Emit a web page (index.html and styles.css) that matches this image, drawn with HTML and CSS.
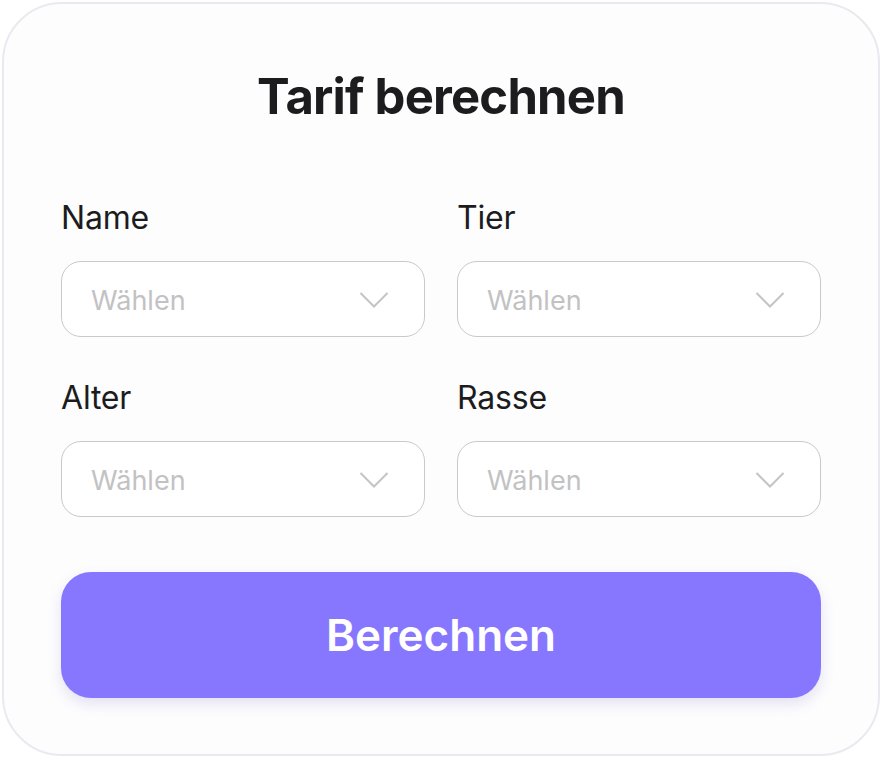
FILE: index.html
```html
<!DOCTYPE html>
<html lang="de">
<head>
<meta charset="utf-8">
<title>Tarif berechnen</title>
<link rel="stylesheet" href="styles.css">
</head>
<body>
<div class="page">
  <form class="card">
    <h1 class="title">Tarif berechnen</h1>
    <div class="grid">
      <div class="field">
        <label class="label">Name</label>
        <div class="select"><span class="placeholder">Wählen</span><svg class="chev" width="30" height="16" viewBox="0 0 30 16"><path d="M1.5 1 L15 14.5 L28.5 1" fill="none" stroke="#c4c4c4" stroke-width="2"/></svg></div>
      </div>
      <div class="field">
        <label class="label">Tier</label>
        <div class="select"><span class="placeholder">Wählen</span><svg class="chev" width="30" height="16" viewBox="0 0 30 16"><path d="M1.5 1 L15 14.5 L28.5 1" fill="none" stroke="#c4c4c4" stroke-width="2"/></svg></div>
      </div>
      <div class="field">
        <label class="label">Alter</label>
        <div class="select"><span class="placeholder">Wählen</span><svg class="chev" width="30" height="16" viewBox="0 0 30 16"><path d="M1.5 1 L15 14.5 L28.5 1" fill="none" stroke="#c4c4c4" stroke-width="2"/></svg></div>
      </div>
      <div class="field">
        <label class="label">Rasse</label>
        <div class="select"><span class="placeholder">Wählen</span><svg class="chev" width="30" height="16" viewBox="0 0 30 16"><path d="M1.5 1 L15 14.5 L28.5 1" fill="none" stroke="#c4c4c4" stroke-width="2"/></svg></div>
      </div>
    </div>
    <button type="button" class="btn">Berechnen</button>
  </form>
</div>
</body>
</html>
```
FILE: styles.css
```css
* { box-sizing: border-box; }
html, body { margin: 0; padding: 0; background: #ffffff; }
body { font-family: Inter, "Noto Sans", sans-serif; color: #1c1c1e; }
.page { padding: 2px; width: 882px; height: 757px; }
.card {
  width: 878px;
  height: 754px;
  border: 2px solid #eae9f0;
  border-radius: 60px;
  background: #fdfdfe;
  padding: 63px 57px 0;
  display: flex;
  flex-direction: column;
}
.title {
  margin: 0;
  text-align: center;
  font-size: 49px;
  font-weight: 700;
  line-height: 60px;
  letter-spacing: -0.8px;
}
.grid {
  margin-top: 73px;
  display: grid;
  grid-template-columns: 1fr 1fr;
  column-gap: 32px;
  row-gap: 43px;
}
.field { display: flex; flex-direction: column; gap: 25px; }
.label { font-size: 32px; line-height: 36px; font-weight: 400; letter-spacing: -0.2px; }
.select {
  height: 76px;
  border: 1.5px solid #c9c9cc;
  border-radius: 20px;
  background: #ffffff;
  display: flex;
  align-items: center;
  justify-content: space-between;
  padding: 2px 35px 0 29px;
}
.placeholder { font-size: 27px; color: #c2c2c4; }
.chev { display: block; }
.btn {
  margin-top: 55px;
  height: 126px;
  border: none;
  border-radius: 30px;
  background: #8777ff;
  color: #ffffff;
  font-family: Inter, "Noto Sans", sans-serif;
  font-size: 44px;
  font-weight: 600;
  box-shadow: 0 6px 14px rgba(90, 70, 160, 0.15);
}
```
